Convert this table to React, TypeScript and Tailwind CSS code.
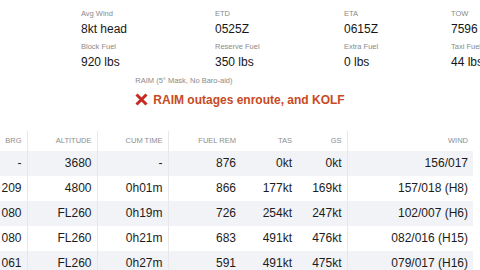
import React from "react";

const summary = [
  { w: "w-[134px]", items: [["Avg Wind", "8kt head"], ["Block Fuel", "920 lbs"]] },
  { w: "w-[129px]", items: [["ETD", "0525Z"], ["Reserve Fuel", "350 lbs"]] },
  { w: "w-[107px]", items: [["ETA", "0615Z"], ["Extra Fuel", "0 lbs"]] },
  { w: "w-[60px]", items: [["TOW", "7596"], ["Taxi Fuel", "44 lbs"]] },
];

const headers = ["BRG", "ALTITUDE", "CUM TIME", "FUEL REM", "TAS", "GS", "WIND"];
const colWidths = [27, 70, 71, 73, 56, 50, 126];
const divided = [true, true, true, false, false, true, false];

const rows = [
  ["-", "3680", "-", "876", "0kt", "0kt", "156/017"],
  ["209", "4800", "0h01m", "866", "177kt", "169kt", "157/018 (H8)"],
  ["080", "FL260", "0h19m", "726", "254kt", "247kt", "102/007 (H6)"],
  ["080", "FL260", "0h21m", "683", "491kt", "476kt", "082/016 (H15)"],
  ["061", "FL260", "0h27m", "591", "491kt", "475kt", "079/017 (H16)"],
];

function RedX() {
  return (
    <svg width="13" height="13" viewBox="0 0 13 13" className="shrink-0">
      <path d="M1.5 1.5 L11.5 11.5 M11.5 1.5 L1.5 11.5" stroke="#c62a21" strokeWidth="3" strokeLinecap="butt" />
    </svg>
  );
}

export default function App() {
  return (
    <div className="h-[270px] w-[480px] overflow-hidden bg-white font-['Liberation_Sans',Arial,sans-serif] whitespace-nowrap">
      <div className="flex pt-[9px] pl-[81px]">
        {summary.map((col) => (
          <div key={col.items[0][0]} className={`${col.w} flex shrink-0 flex-col gap-y-[5.5px]`}>
            {col.items.map(([label, value]) => (
              <div key={label}>
                <div className="text-[7.5px] leading-[10px] text-[#8a8a8a]">{label}</div>
                <div className="mt-[2.5px] text-[12px] leading-[15px] text-[#161616]">{value}</div>
              </div>
            ))}
          </div>
        ))}
      </div>

      <div className="mt-[6.5px] flex justify-center">
        <div className="flex flex-col items-start">
          <div className="text-[7.5px] leading-[10px] text-[#8a8a8a]">RAIM (5° Mask, No Baro-aid)</div>
          <div className="mt-[5.5px] flex h-[16px] items-center gap-[5px]">
            <RedX />
            <span className="text-[12px] font-bold text-[#c84a1f]">RAIM outages enroute, and KOLF</span>
          </div>
        </div>
      </div>

      <table className="mt-[23px] table-fixed border-collapse">
        <colgroup>
          {colWidths.map((w, i) => (
            <col key={i} style={{ width: w }} />
          ))}
        </colgroup>
        <thead>
          <tr className="h-[20px]">
            {headers.map((h, i) => (
              <th
                key={h}
                className={`pr-[5px] text-right text-[7.5px] font-normal text-[#8e8e8e] ${divided[i] ? "border-r border-[#e8e8ea]" : ""}`}
              >
                {h}
              </th>
            ))}
          </tr>
        </thead>
        <tbody>
          {rows.map((r, ri) => (
            <tr key={ri} className={`h-[25px] ${ri % 2 === 0 ? "bg-[#f2f3f7]" : "bg-white"}`}>
              {r.map((c, ci) => (
                <td
                  key={ci}
                  className={`pr-[5px] text-right text-[12px] text-[#1c1c1c] ${divided[ci] ? "border-r border-[#e8e8ea]" : ""}`}
                >
                  {c}
                </td>
              ))}
            </tr>
          ))}
        </tbody>
      </table>
    </div>
  );
}
